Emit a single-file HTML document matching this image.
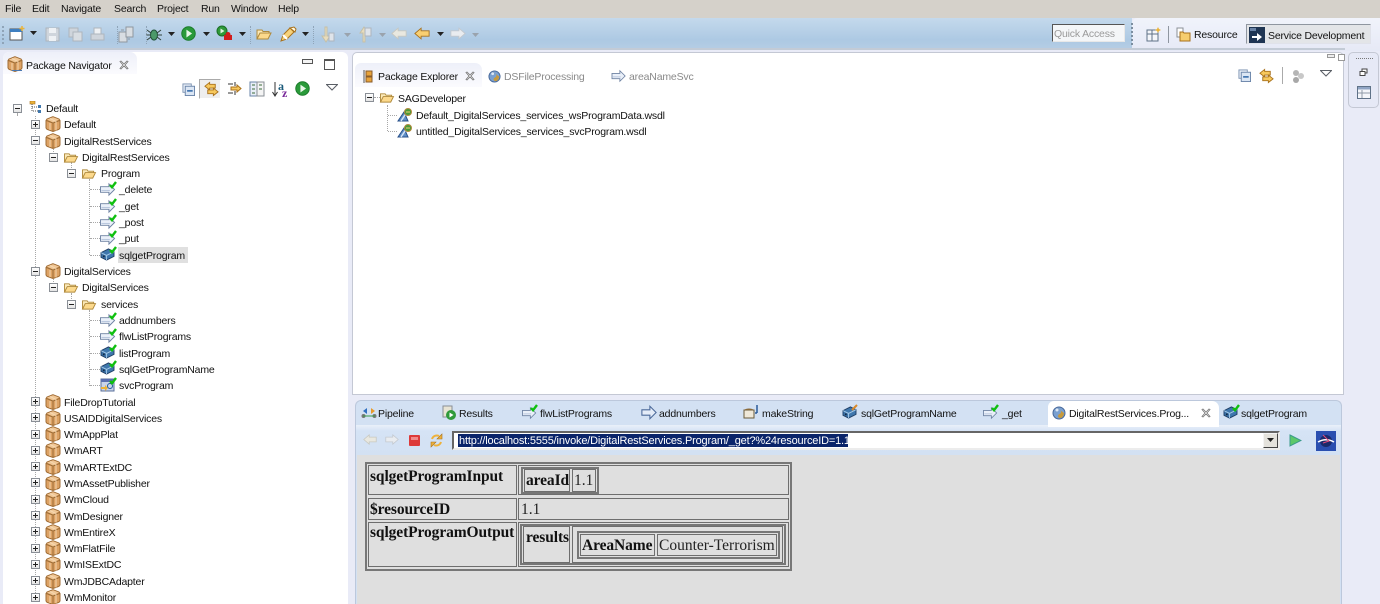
<!DOCTYPE html>
<html><head><meta charset="utf-8"><style>
html,body{margin:0;padding:0;width:1380px;height:604px;overflow:hidden;background:#e9ebf7}
#r{position:relative;width:1380px;height:604px;overflow:hidden;font:10.5px "Liberation Sans",sans-serif;letter-spacing:-.18px;color:#111;background:#e9ebf7;filter:blur(.3px)}
#r div,#r span.t,#r svg{position:absolute}
.t{white-space:nowrap;line-height:14px;height:14px;margin-top:1px}
.m{margin-top:0}
.box{width:7px;height:7px;border:1px solid #8a8f96;background:linear-gradient(#fff,#e4e4e4);font-size:0}
.box:before{content:"";position:absolute;left:1px;top:3px;width:5px;height:1px;background:#222}
.p:after{content:"";position:absolute;left:3px;top:1px;width:1px;height:5px;background:#222}
.v{border-left:1px dotted #a8a8a8;width:0}
.h{border-top:1px dotted #a8a8a8;height:0}
.c{border:1px solid #6e6e6e;box-sizing:border-box}
.s{font:bold 15.5px "Liberation Serif",serif;color:#111;white-space:nowrap;letter-spacing:-.1px;line-height:18px;margin-top:1px}
.n{font:15.5px "Liberation Serif",serif;color:#222;white-space:nowrap;letter-spacing:0;line-height:18px;margin-top:1px}
</style></head><body><div id="r">
<svg width="0" height="0" style="left:0;top:0"><defs>
<symbol id="pkg" viewBox="0 0 16 16"><path d="M8 .7l6 2.300 1 1.500v7.500l-1 1.300-6 2.200-6-2.200-1-1.300V4.500L2 3z" fill="#dda264" stroke="#a06c34"/><path d="M1.500 4.500L8 7l6.500-2.500M8 7v8" fill="none" stroke="#9a6a34"/><path d="M8 1.200l6 2.300L8 6.500 2 3.500z" fill="#f0c796"/><path d="M5 2.500l6 3v9M5 7v7" fill="none" stroke="#f6dcb8" stroke-width=".9"/></symbol>
<symbol id="fo" viewBox="0 0 16 14"><path d="M1 3h5l1 1.500h6v2H4L1 12z" fill="#fbe9b8" stroke="#b08a3c"/><path d="M1 12l3-6h11l-3 6z" fill="#fcd98c" stroke="#b08a3c"/></symbol>
<symbol id="arrow" viewBox="0 0 18 16"><path d="M1 5h9V2l6 6-6 6v-3H1z" fill="#eaf0f9" stroke="#6e82a2"/><path d="M2 9h9" stroke="#b5c4dc"/></symbol>
<symbol id="chk" viewBox="0 0 8 8"><path d="M1 4l2 2.200 4-5.200" fill="none" stroke="#0fc00f" stroke-width="2.400"/></symbol>
<symbol id="cube" viewBox="0 0 16 14"><path d="M1 5l8-4 6 3v5l-8 4-6-3z" fill="#3f77ad" stroke="#1f3f66"/><path d="M1 5l6 3 8-4M7 8v5" fill="none" stroke="#a7cbe8"/><rect x="3" y="8" width="2" height="2" fill="#132b48"/></symbol>
<symbol id="wsdl" viewBox="0 0 16 14"><path d="M1 13L7 4l4 9z" fill="#5f8fc8" stroke="#28508a"/><path d="M4 13l6-9" stroke="#d6e4f5" stroke-width="1.500"/><circle cx="11" cy="4" r="3.500" fill="#4a9a3a" stroke="#b08a3c"/><path d="M9 4h4" stroke="#f2d070"/></symbol>
<symbol id="run" viewBox="0 0 16 16"><circle cx="8" cy="8" r="7.200" fill="#2a9a3a" stroke="#1a7a2a"/><path d="M5.800 3.800l6 4.200-6 4.200z" fill="#e8f6e8"/></symbol>
<symbol id="globe" viewBox="0 0 14 14"><circle cx="7" cy="7" r="6" fill="#7aa0d0" stroke="#47689a"/><path d="M5 2c2 2 4 2 4 4s-3 2-3 4 2 2 3 2c2-1 3-3 3-5" fill="#c79a3c"/><circle cx="5" cy="4" r="1.500" fill="#dce8f6"/></symbol>
<symbol id="x" viewBox="0 0 10 10"><path d="M1 1.500L2 1l3 3 3-3 1 .5-3 3.500 3 3.500-1 .5-3-3-3 3-1-.5 3-3.500z" fill="#fff" stroke="#777" stroke-width=".8"/></symbol>
<symbol id="dd" viewBox="0 0 7 4"><path d="M0 0h7L3.500 4z" fill="#222"/></symbol>
<symbol id="ddg" viewBox="0 0 7 4"><path d="M0 0h7L3.500 4z" fill="#9aa3ad"/></symbol>
<symbol id="menu" viewBox="0 0 12 7"><path d="M.5.500h11L6 6z" fill="#fff" stroke="#5a5f66"/></symbol>
<symbol id="link" viewBox="0 0 16 16"><path d="M6 1L1 5l5 4V7h6V3H6z" fill="#f7c85c" stroke="#a8711c"/><path d="M10 7l5 4-5 4v-2H4V9h6z" fill="#f7c85c" stroke="#a8711c"/></symbol>
<symbol id="coll" viewBox="0 0 14 14"><rect x="1" y="1" width="9" height="9" fill="#e8eef7" stroke="#7e94b2"/><rect x="3.500" y="3.500" width="10" height="10" fill="#dbe6f4" stroke="#6a84a8"/><path d="M5.500 8.500h6" stroke="#1f5aa0" stroke-width="1.500"/></symbol>
<symbol id="la" viewBox="0 0 18 14"><path d="M1 7l7-6v3h9v6H8v3z" fill="#f9cf72" stroke="#a8711c"/></symbol>
<symbol id="ra" viewBox="0 0 18 14"><path d="M17 7l-7-6v3H1v6h9v3z" fill="#e9ecf0" stroke="#c3c8ce"/></symbol>
<symbol id="lg" viewBox="0 0 18 14"><path d="M1 7l7-6v3h9v6H8v3z" fill="#e9e8e0" stroke="#c8c8c0"/></symbol>
</defs></svg>

<!-- Menu -->
<div style="left:0;top:0;width:1380px;height:18px;background:#d5d1ca"></div>
<span class="t m" style="left:5px;top:2px">File</span>
<span class="t m" style="left:32px;top:2px">Edit</span>
<span class="t m" style="left:61px;top:2px">Navigate</span>
<span class="t m" style="left:114px;top:2px">Search</span>
<span class="t m" style="left:157px;top:2px">Project</span>
<span class="t m" style="left:201px;top:2px">Run</span>
<span class="t m" style="left:231px;top:2px">Window</span>
<span class="t m" style="left:278px;top:2px">Help</span>

<!-- Toolbar -->
<div style="left:0;top:18px;width:1132px;height:31px;background:linear-gradient(#c4d9ec,#adc9e3 70%,#b5cde4)"></div>
<div style="left:1132px;top:18px;width:248px;height:33px;background:linear-gradient(#f0f3fb,#e6e9f6);border-top-left-radius:5px"></div>
<div style="left:0;top:48px;width:1345px;height:2px;background:#c3cbd6"></div>
<!-- icons toolbar -->
<svg style="left:9px;top:26px" width="16" height="15" viewBox="0 0 16 15"><rect x="1" y="3" width="12" height="11" fill="#fff" stroke="#555"/><rect x="1" y="3" width="12" height="3" fill="#3f7fc0"/><path d="M13 0v5M10.500 2.500h5" stroke="#eab33a" stroke-width="1.500"/></svg>
<svg style="left:30px;top:31px" width="7" height="4"><use href="#dd"/></svg>
<svg style="left:45px;top:27px" width="15" height="15" viewBox="0 0 15 15"><rect x="1" y="1" width="13" height="13" fill="#cfd5dc" stroke="#aeb5bd"/><rect x="4" y="1" width="7" height="5" fill="#eef1f4"/><rect x="4" y="9" width="7" height="5" fill="#eef1f4"/></svg>
<svg style="left:68px;top:27px" width="15" height="15" viewBox="0 0 15 15"><rect x="1" y="1" width="9" height="9" fill="#cfd5dc" stroke="#aeb5bd"/><rect x="5" y="5" width="9" height="9" fill="#d8dde2" stroke="#aeb5bd"/></svg>
<svg style="left:90px;top:27px" width="15" height="15" viewBox="0 0 15 15"><rect x="4" y="1" width="7" height="6" fill="#eef1f4" stroke="#aeb5bd"/><rect x="1" y="7" width="13" height="6" fill="#cfd5dc" stroke="#aeb5bd"/></svg>
<svg style="left:118px;top:26px" width="16" height="17" viewBox="0 0 16 17"><rect x="1" y="6" width="8" height="10" fill="#d8dde2" stroke="#8f979f"/><rect x="8" y="1" width="7" height="10" fill="#d8dde2" stroke="#8f979f"/><path d="M3 4h3M12 13h-2" stroke="#8f979f"/></svg>
<svg style="left:146px;top:26px" width="16" height="16" viewBox="0 0 16 16"><ellipse cx="8" cy="9" rx="3.500" ry="5" fill="#4c9a6a" stroke="#24543c"/><path d="M1 4l4 3M15 4l-4 3M0 9h4M16 9h-4M1 14l4-3M15 14l-4-3" stroke="#33443c"/></svg>
<svg style="left:168px;top:32px" width="7" height="4"><use href="#dd"/></svg>
<svg style="left:181px;top:26px" width="15" height="15"><use href="#run"/></svg>
<svg style="left:203px;top:32px" width="7" height="4"><use href="#dd"/></svg>
<svg style="left:216px;top:25px" width="17" height="17" viewBox="0 0 17 17"><circle cx="6" cy="6" r="5" fill="#2f9a3a" stroke="#1a6e26"/><path d="M4.500 3.500l4 2.500-4 2.500z" fill="#dff2df"/><rect x="8" y="10" width="8" height="5" fill="#d01c1c"/><circle cx="12" cy="9.500" r="2.500" fill="#d01c1c"/></svg>
<svg style="left:239px;top:32px" width="7" height="4"><use href="#dd"/></svg>
<svg style="left:256px;top:27px" width="16" height="14"><use href="#fo"/></svg>
<svg style="left:280px;top:26px" width="17" height="16" viewBox="0 0 17 16"><path d="M1 15l2-6 7-7 4 4-7 7z" fill="#f7d27a" stroke="#a8711c"/><path d="M3 9l4 4" stroke="#fff" stroke-width="2"/><path d="M10 2l4-1 2 2-1 3z" fill="#fff8e0" stroke="#a8711c"/></svg>
<svg style="left:302px;top:32px" width="7" height="4"><use href="#dd"/></svg>
<svg style="left:320px;top:26px" width="15" height="17" viewBox="0 0 15 17"><path d="M5 1v9H2l4 6 4-6H7V1z" fill="#e8dcbc" stroke="#c4bfa8"/><rect x="9" y="7" width="5" height="8" fill="#dfe4ea" stroke="#adb5be"/></svg>
<svg style="left:344px;top:33px" width="7" height="4"><use href="#ddg"/></svg>
<svg style="left:357px;top:26px" width="15" height="17" viewBox="0 0 15 17"><path d="M6 16V7H3l4-6 4 6H8v9z" fill="#e8dcbc" stroke="#c4bfa8"/><rect x="8" y="2" width="6" height="8" fill="#dfe4ea" stroke="#adb5be"/></svg>
<svg style="left:379px;top:33px" width="7" height="4"><use href="#ddg"/></svg>
<svg style="left:391px;top:27px" width="16" height="13"><use href="#lg"/></svg>
<svg style="left:414px;top:27px" width="16" height="13"><use href="#la"/></svg>
<svg style="left:437px;top:32px" width="7" height="4"><use href="#dd"/></svg>
<svg style="left:450px;top:27px" width="16" height="13"><use href="#ra"/></svg>
<svg style="left:472px;top:33px" width="7" height="4"><use href="#ddg"/></svg>
<!-- separators -->
<div style="left:2px;top:26px;width:0;height:18px;border-left:2px dotted #8fa4b8"></div>
<div style="left:117px;top:26px;width:0;height:18px;border-left:1px dotted #8fa4b8"></div>
<div style="left:146px;top:26px;width:0;height:18px;border-left:1px dotted #8fa4b8"></div>
<div style="left:250px;top:26px;width:0;height:18px;border-left:1px dotted #8fa4b8"></div>
<div style="left:313px;top:26px;width:0;height:18px;border-left:1px dotted #8fa4b8"></div>
<div style="left:1131px;top:23px;width:0;height:22px;border-left:2px dotted #7c8ea0"></div>
<!-- Quick access -->
<div style="left:1052px;top:24px;width:73px;height:18px;box-sizing:border-box;background:#f4f6f8;border:1px solid;border-color:#555 #e8e8e8 #e8e8e8 #555"></div>
<span class="t" style="left:1054px;top:26px;color:#9a9a9a">Quick Access</span>
<!-- Perspectives -->
<svg style="left:1146px;top:27px" width="15" height="15" viewBox="0 0 15 15"><rect x="1" y="3" width="11" height="11" fill="#f4f6fa" stroke="#5f7288"/><path d="M1 7h11M6 3v11" stroke="#5f7288"/><path d="M12 0l1 2 2 1-2 1-1 2-1-2-2-1 2-1z" fill="#eab33a"/></svg>
<div style="left:1168px;top:26px;width:1px;height:17px;background:#8f96a0"></div>
<svg style="left:1176px;top:27px" width="15" height="15" viewBox="0 0 15 15"><rect x="1" y="1" width="6" height="9" fill="#fff" stroke="#8a8f96"/><path d="M4 5h3l1 1h6v8H4z" fill="#f6cd6e" stroke="#a8711c"/></svg>
<span class="t" style="left:1194px;top:27px;color:#111">Resource</span>
<div style="left:1246px;top:24px;width:125px;height:20px;box-sizing:border-box;background:#e3e5e8;border:1px solid;border-color:#8f96a0 #e0e2ea #e0e2ea #8f96a0"></div>
<svg style="left:1249px;top:27px" width="16" height="16" viewBox="0 0 16 16"><rect width="16" height="16" fill="#1f3553"/><rect x="1" y="1" width="6" height="3" fill="#6a83a6"/><path d="M3 9h5V6l5 4-5 4v-3H3z" fill="#fff"/></svg>
<span class="t" style="left:1268px;top:28px;color:#111">Service Development</span>

<!-- Left panel -->
<div style="left:3px;top:52px;width:345px;height:552px;background:#fff;border-top-left-radius:6px;border-top-right-radius:6px"></div>
<div style="left:3px;top:52px;width:134px;height:22px;background:linear-gradient(#eef0f9,#fbfbfe);border-top-left-radius:6px;border-top-right-radius:7px"></div>
<svg style="left:7px;top:56px" width="16" height="16"><use href="#pkg"/></svg>
<div style="left:12px;top:70px;width:10px;height:1px;background:#4a78b0"></div>
<span class="t" style="left:26px;top:58px;color:#111">Package Navigator</span>
<svg style="left:119px;top:60px" width="10" height="10"><use href="#x"/></svg>
<div style="left:302px;top:59px;width:9px;height:3px;border:1px solid #555;background:#f4f4f4"></div>
<div style="left:324px;top:59px;width:9px;height:8px;border:1px solid #555;border-top-width:2px;background:#fff"></div>
<!-- left view toolbar -->
<svg style="left:182px;top:83px" width="13" height="13"><use href="#coll"/></svg>
<div style="left:199px;top:79px;width:22px;height:20px;box-sizing:border-box;background:#eeeeee;border:1px solid;border-color:#aaa #fff #fff #aaa"></div>
<svg style="left:204px;top:81px" width="15" height="16"><use href="#link"/></svg>
<svg style="left:227px;top:81px" width="15" height="15" viewBox="0 0 15 15"><path d="M1 3h5M1 12h5M8 1v4M8 10v4" stroke="#333"/><path d="M4 6h6V4l4 3.500-4 3.500V9H4z" fill="#f7c85c" stroke="#a8711c"/></svg>
<svg style="left:249px;top:81px" width="16" height="16" viewBox="0 0 16 16"><rect x="1" y="1" width="7" height="14" fill="#e8eef7" stroke="#6a84a8"/><rect x="8" y="1" width="7" height="14" fill="#f4f4f4" stroke="#8a8f96"/><path d="M3 4h3M3 8h3M10 4h3M10 8h3M3 12h3" stroke="#3a6a3a"/></svg>
<svg style="left:272px;top:82px" width="6" height="15" viewBox="0 0 6 15"><path d="M3 0v13M.5 10L3 14l2.500-4" fill="none" stroke="#333"/></svg>
<span class="t m" style="left:278px;top:81px;font:bold 12px 'Liberation Serif',serif;color:#1a5a7a;height:10px;line-height:10px">a</span>
<span class="t m" style="left:282px;top:88px;font:bold 12px 'Liberation Serif',serif;color:#7a2a9a;height:10px;line-height:10px">z</span>
<svg style="left:295px;top:81px" width="15" height="15"><use href="#run"/></svg>
<svg style="left:326px;top:84px" width="12" height="7"><use href="#menu"/></svg>

<!-- Tree lines -->
<div class="v" style="left:17px;top:113px;height:2px"></div>
<div class="v" style="left:35px;top:116px;height:485px"></div>
<div class="v" style="left:53px;top:146px;height:8px"></div>
<div class="v" style="left:71px;top:162px;height:8px"></div>
<div class="v" style="left:89px;top:179px;height:76px"></div>
<div class="v" style="left:53px;top:276px;height:8px"></div>
<div class="v" style="left:71px;top:293px;height:8px"></div>
<div class="v" style="left:89px;top:310px;height:76px"></div>
<div class="h" style="left:90px;top:189px;width:10px"></div>
<div class="h" style="left:90px;top:206px;width:10px"></div>
<div class="h" style="left:90px;top:222px;width:10px"></div>
<div class="h" style="left:90px;top:238px;width:10px"></div>
<div class="h" style="left:90px;top:255px;width:10px"></div>
<div class="h" style="left:90px;top:320px;width:10px"></div>
<div class="h" style="left:90px;top:336px;width:10px"></div>
<div class="h" style="left:90px;top:353px;width:10px"></div>
<div class="h" style="left:90px;top:369px;width:10px"></div>
<div class="h" style="left:90px;top:385px;width:10px"></div>

<!-- Tree -->
<div class="box" style="left:13px;top:104px"></div>
<svg style="left:27px;top:101px" width="15" height="13" viewBox="0 0 15 13"><rect x="3" y="0" width="5" height="3" fill="#eab33a" stroke="#a8711c" stroke-width=".6"/><path d="M5 3v7h7M5 6h7" fill="none" stroke="#555" stroke-dasharray="1 1"/><rect x="11" y="4" width="3" height="3" fill="#3f77ad"/><rect x="11" y="9" width="3" height="3" fill="#3f77ad"/></svg>
<span class="t" style="left:46px;top:101px">Default</span>

<div class="box p" style="left:31px;top:120px"></div><svg style="left:45px;top:116px" width="16" height="16"><use href="#pkg"/></svg><span class="t" style="left:64px;top:117px">Default</span>
<div class="box" style="left:31px;top:136px"></div><svg style="left:45px;top:133px" width="16" height="16"><use href="#pkg"/></svg><span class="t" style="left:64px;top:134px">DigitalRestServices</span>
<div class="box" style="left:49px;top:153px"></div><svg style="left:63px;top:151px" width="16" height="13"><use href="#fo"/></svg><span class="t" style="left:82px;top:150px">DigitalRestServices</span>
<div class="box" style="left:67px;top:169px"></div><svg style="left:81px;top:167px" width="16" height="13"><use href="#fo"/></svg><span class="t" style="left:101px;top:166px">Program</span>

<svg style="left:99px;top:182px" width="18" height="15"><use href="#arrow"/></svg><svg style="left:109px;top:181px" width="8" height="8"><use href="#chk"/></svg><span class="t" style="left:119px;top:182px">_delete</span>
<svg style="left:99px;top:199px" width="18" height="15"><use href="#arrow"/></svg><svg style="left:109px;top:198px" width="8" height="8"><use href="#chk"/></svg><span class="t" style="left:119px;top:199px">_get</span>
<svg style="left:99px;top:215px" width="18" height="15"><use href="#arrow"/></svg><svg style="left:109px;top:214px" width="8" height="8"><use href="#chk"/></svg><span class="t" style="left:119px;top:215px">_post</span>
<svg style="left:99px;top:231px" width="18" height="15"><use href="#arrow"/></svg><svg style="left:109px;top:230px" width="8" height="8"><use href="#chk"/></svg><span class="t" style="left:119px;top:231px">_put</span>
<div style="left:118px;top:247px;width:70px;height:16px;background:#e0e0e0"></div>
<svg style="left:100px;top:248px" width="15" height="13"><use href="#cube"/></svg><svg style="left:109px;top:246px" width="8" height="8"><use href="#chk"/></svg><span class="t" style="left:119px;top:248px">sqlgetProgram</span>

<div class="box" style="left:31px;top:267px"></div><svg style="left:45px;top:263px" width="16" height="16"><use href="#pkg"/></svg><span class="t" style="left:64px;top:264px">DigitalServices</span>
<div class="box" style="left:49px;top:283px"></div><svg style="left:63px;top:281px" width="16" height="13"><use href="#fo"/></svg><span class="t" style="left:82px;top:280px">DigitalServices</span>
<div class="box" style="left:67px;top:300px"></div><svg style="left:81px;top:298px" width="16" height="13"><use href="#fo"/></svg><span class="t" style="left:101px;top:297px">services</span>
<svg style="left:99px;top:313px" width="18" height="15"><use href="#arrow"/></svg><svg style="left:109px;top:312px" width="8" height="8"><use href="#chk"/></svg><span class="t" style="left:119px;top:313px">addnumbers</span>
<svg style="left:99px;top:329px" width="18" height="15"><use href="#arrow"/></svg><svg style="left:109px;top:328px" width="8" height="8"><use href="#chk"/></svg><span class="t" style="left:119px;top:329px">flwListPrograms</span>
<svg style="left:100px;top:346px" width="15" height="13"><use href="#cube"/></svg><svg style="left:109px;top:344px" width="8" height="8"><use href="#chk"/></svg><span class="t" style="left:119px;top:346px">listProgram</span>
<svg style="left:100px;top:362px" width="15" height="13"><use href="#cube"/></svg><svg style="left:109px;top:360px" width="8" height="8"><use href="#chk"/></svg><span class="t" style="left:119px;top:362px">sqlGetProgramName</span>
<svg style="left:100px;top:378px" width="15" height="14" viewBox="0 0 15 14"><rect x="1" y="1" width="13" height="12" fill="#c8d4ea" stroke="#5a6f9a"/><rect x="1" y="1" width="13" height="3" fill="#5a6fb0"/><path d="M1 9h4V7l3 3-3 3v-2H1z" fill="#eab33a"/><circle cx="10" cy="8" r="2.500" fill="none" stroke="#1f5aa0"/></svg><svg style="left:109px;top:377px" width="8" height="8"><use href="#chk"/></svg><span class="t" style="left:119px;top:378px">svcProgram</span>

<div class="box p" style="left:31px;top:397px"></div><svg style="left:45px;top:394px" width="16" height="16"><use href="#pkg"/></svg><span class="t" style="left:64px;top:395px">FileDropTutorial</span>
<div class="box p" style="left:31px;top:413px"></div><svg style="left:45px;top:410px" width="16" height="16"><use href="#pkg"/></svg><span class="t" style="left:64px;top:411px">USAIDDigitalServices</span>
<div class="box p" style="left:31px;top:430px"></div><svg style="left:45px;top:426px" width="16" height="16"><use href="#pkg"/></svg><span class="t" style="left:64px;top:427px">WmAppPlat</span>
<div class="box p" style="left:31px;top:446px"></div><svg style="left:45px;top:442px" width="16" height="16"><use href="#pkg"/></svg><span class="t" style="left:64px;top:443px">WmART</span>
<div class="box p" style="left:31px;top:462px"></div><svg style="left:45px;top:459px" width="16" height="16"><use href="#pkg"/></svg><span class="t" style="left:64px;top:460px">WmARTExtDC</span>
<div class="box p" style="left:31px;top:478px"></div><svg style="left:45px;top:475px" width="16" height="16"><use href="#pkg"/></svg><span class="t" style="left:64px;top:476px">WmAssetPublisher</span>
<div class="box p" style="left:31px;top:495px"></div><svg style="left:45px;top:491px" width="16" height="16"><use href="#pkg"/></svg><span class="t" style="left:64px;top:492px">WmCloud</span>
<div class="box p" style="left:31px;top:511px"></div><svg style="left:45px;top:508px" width="16" height="16"><use href="#pkg"/></svg><span class="t" style="left:64px;top:509px">WmDesigner</span>
<div class="box p" style="left:31px;top:527px"></div><svg style="left:45px;top:524px" width="16" height="16"><use href="#pkg"/></svg><span class="t" style="left:64px;top:525px">WmEntireX</span>
<div class="box p" style="left:31px;top:544px"></div><svg style="left:45px;top:540px" width="16" height="16"><use href="#pkg"/></svg><span class="t" style="left:64px;top:541px">WmFlatFile</span>
<div class="box p" style="left:31px;top:560px"></div><svg style="left:45px;top:556px" width="16" height="16"><use href="#pkg"/></svg><span class="t" style="left:64px;top:557px">WmISExtDC</span>
<div class="box p" style="left:31px;top:576px"></div><svg style="left:45px;top:573px" width="16" height="16"><use href="#pkg"/></svg><span class="t" style="left:64px;top:574px">WmJDBCAdapter</span>
<div class="box p" style="left:31px;top:593px"></div><svg style="left:45px;top:589px" width="16" height="16"><use href="#pkg"/></svg><span class="t" style="left:64px;top:590px">WmMonitor</span>

<!-- Editor panel -->
<div style="left:352px;top:52px;width:992px;height:343px;background:#fff;border:1px solid #c4c8d4;box-sizing:border-box;border-radius:5px 5px 0 0"></div>
<div style="left:355px;top:63px;width:127px;height:24px;background:linear-gradient(#eef0f9,#fbfbfe);border-radius:6px 7px 0 0"></div>
<svg style="left:363px;top:69px" width="10" height="15" viewBox="0 0 10 15"><path d="M1 1v13" stroke="#555"/><rect x="3" y="2" width="6" height="5" fill="#e8a33a" stroke="#8a5c2a"/><rect x="3" y="8" width="6" height="5" fill="#e8a33a" stroke="#8a5c2a"/></svg>
<span class="t m" style="left:378px;top:70px;color:#111">Package Explorer</span>
<svg style="left:465px;top:71px" width="10" height="10"><use href="#x"/></svg>
<svg style="left:488px;top:70px" width="13" height="13"><use href="#globe"/></svg>
<span class="t m" style="left:504px;top:70px;color:#8a8a8a">DSFileProcessing</span>
<svg style="left:611px;top:69px" width="16" height="14"><use href="#arrow"/></svg>
<span class="t m" style="left:629px;top:70px;color:#8a8a8a">areaNameSvc</span>
<svg style="left:1238px;top:69px" width="13" height="13"><use href="#coll"/></svg>
<svg style="left:1259px;top:68px" width="15" height="16"><use href="#link"/></svg>
<div style="left:1282px;top:67px;width:1px;height:17px;background:#aaa"></div>
<svg style="left:1291px;top:69px" width="14" height="14" viewBox="0 0 14 14"><circle cx="5" cy="4" r="3" fill="#b5b5b5"/><circle cx="10" cy="7" r="3" fill="#c8c8c8"/><circle cx="5" cy="11" r="3" fill="#a8a8a8"/></svg>
<svg style="left:1320px;top:70px" width="12" height="7"><use href="#menu"/></svg>
<div style="left:1327px;top:54px;width:6px;height:2px;border:1px solid #999;background:#eee"></div>
<div style="left:1338px;top:54px;width:5px;height:5px;border:1px solid #999;background:#fff"></div>

<div class="box" style="left:365px;top:93px"></div>
<div class="h" style="left:374px;top:97px;width:6px"></div>
<svg style="left:379px;top:91px" width="16" height="13"><use href="#fo"/></svg>
<span class="t m" style="left:398px;top:92px;color:#111">SAGDeveloper</span>
<div class="v" style="left:387px;top:105px;height:26px"></div>
<div class="h" style="left:388px;top:115px;width:9px"></div>
<div class="h" style="left:388px;top:131px;width:9px"></div>
<svg style="left:397px;top:108px" width="16" height="14"><use href="#wsdl"/></svg>
<span class="t" style="left:416px;top:108px;color:#111">Default_DigitalServices_services_wsProgramData.wsdl</span>
<svg style="left:397px;top:124px" width="16" height="14"><use href="#wsdl"/></svg>
<span class="t" style="left:416px;top:124px;color:#111">untitled_DigitalServices_services_svcProgram.wsdl</span>

<!-- Bottom panel -->
<div style="left:355px;top:400px;width:987px;height:204px;background:#d3e1f3;border:1px solid #bcc8dc;border-bottom:0;box-sizing:border-box;border-radius:6px 6px 0 0"></div>
<div style="left:356px;top:425px;width:985px;height:30px;background:linear-gradient(#eaf0f9,#d5e3f5 20%,#d3e1f3)"></div>
<div style="left:357px;top:455px;width:983px;height:149px;background:#dfdfdf"></div>
<div style="left:1048px;top:401px;width:171px;height:26px;background:#fff;border-radius:6px 7px 0 0"></div>

<svg style="left:361px;top:405px" width="16" height="14" viewBox="0 0 16 14"><circle cx="2.500" cy="11" r="2" fill="#777"/><circle cx="13.500" cy="11" r="2" fill="#777"/><path d="M2 11h12" stroke="#3a9a4a"/><path d="M2 6l4-3v6z" fill="#2f6fc0"/><path d="M14 6l-4-3v6z" fill="#e89a2a"/></svg>
<span class="t" style="left:378px;top:406px;color:#111">Pipeline</span>
<svg style="left:442px;top:405px" width="15" height="16" viewBox="0 0 15 16"><rect x="1" y="1" width="9" height="11" fill="#e8e4d4" stroke="#8a8f96"/><circle cx="9" cy="10" r="5" fill="#2f9a3a"/><path d="M7.500 7.500l4 2.500-4 2.500z" fill="#fff"/></svg>
<span class="t" style="left:459px;top:406px;color:#111">Results</span>
<svg style="left:521px;top:406px" width="17" height="14"><use href="#arrow"/></svg><svg style="left:530px;top:404px" width="8" height="8"><use href="#chk"/></svg>
<span class="t" style="left:540px;top:406px;color:#111">flwListPrograms</span>
<svg style="left:641px;top:405px" width="16" height="15" viewBox="0 0 18 16"><path d="M1 5h9V1l7 7-7 7v-4H1z" fill="#e4ecf8" stroke="#4c6a9a" stroke-width="1.200"/></svg>
<span class="t" style="left:659px;top:406px;color:#111">addnumbers</span>
<svg style="left:743px;top:405px" width="16" height="15" viewBox="0 0 16 15"><path d="M1 5h10v8H1z" fill="#efe8d8" stroke="#6a5a3a"/><path d="M1 5c2-2 8-2 10 0" fill="#8a6a3a"/><path d="M14 0v8M12 8h2" stroke="#2a5a9a" stroke-width="1.500"/></svg>
<span class="t" style="left:762px;top:406px;color:#111">makeString</span>
<svg style="left:842px;top:406px" width="15" height="13"><use href="#cube"/></svg>
<svg style="left:851px;top:404px" width="7" height="7" viewBox="0 0 7 7"><path d="M1 6l5-5" stroke="#d98a2a" stroke-width="2"/></svg>
<span class="t" style="left:861px;top:406px;color:#111">sqlGetProgramName</span>
<svg style="left:982px;top:406px" width="17" height="14"><use href="#arrow"/></svg><svg style="left:991px;top:404px" width="8" height="8"><use href="#chk"/></svg>
<span class="t" style="left:1002px;top:406px;color:#111">_get</span>
<svg style="left:1052px;top:406px" width="14" height="14"><use href="#globe"/></svg>
<span class="t" style="left:1069px;top:406px;color:#111">DigitalRestServices.Prog...</span>
<svg style="left:1201px;top:408px" width="10" height="10"><use href="#x"/></svg>
<svg style="left:1223px;top:406px" width="15" height="13"><use href="#cube"/></svg><svg style="left:1232px;top:404px" width="8" height="8"><use href="#chk"/></svg>
<span class="t" style="left:1241px;top:406px;color:#111">sqlgetProgram</span>

<!-- Browser bar -->
<svg style="left:363px;top:434px" width="14" height="11"><use href="#lg"/></svg>
<svg style="left:385px;top:434px" width="14" height="11"><use href="#ra"/></svg>
<svg style="left:409px;top:435px" width="11" height="11" viewBox="0 0 11 11"><rect width="11" height="11" rx="1" fill="#dd3a3a"/><rect x="2" y="2" width="7" height="3" fill="#f08a8a"/></svg>
<svg style="left:429px;top:433px" width="15" height="15" viewBox="0 0 15 15"><path d="M13 1v5H8zM2 14V9h5z" fill="#eeb13a" stroke="#a8711c" stroke-width=".6"/><path d="M3 6a5 5 0 0 1 7-3M12 9a5 5 0 0 1-7 3" fill="none" stroke="#eeb13a" stroke-width="2"/></svg>
<div style="left:452px;top:431px;width:828px;height:19px;box-sizing:border-box;background:#fff;border:2px solid;border-color:#666 #ececec #ececec #666"></div>
<div style="left:458px;top:434px;width:390px;height:13px;background:#0a246a"></div>
<span class="t" style="left:459px;top:433px;color:#fff;font-size:11px;letter-spacing:-.18px">http://localhost:5555/invoke/DigitalRestServices.Program/_get?%24resourceID=1.1</span>
<div style="left:1263px;top:433px;width:15px;height:15px;box-sizing:border-box;background:#e4e2dc;border:1px solid;border-color:#f4f4f4 #444 #444 #f4f4f4"></div>
<svg style="left:1267px;top:438px" width="7" height="4"><use href="#dd"/></svg>
<svg style="left:1289px;top:434px" width="13" height="13" viewBox="0 0 13 13"><path d="M1 1l11 5.500L1 12z" fill="#5cc86a" stroke="#3a9a8a"/></svg>
<svg style="left:1316px;top:431px" width="20" height="20" viewBox="0 0 20 20"><rect width="20" height="20" fill="#2a4fb0"/><circle cx="10" cy="10" r="6" fill="#1a2a6a"/><path d="M2 11c5-3 11-3 16 0" stroke="#fff" stroke-width="1.500" fill="none"/><path d="M7 4l6 6-6 2" stroke="#e04a7a" fill="none"/></svg>

<!-- HTML table -->
<div class="c" style="left:365px;top:462px;width:427px;height:109px;border:2px solid #777"></div>
<div class="c" style="left:368px;top:465px;width:149px;height:30px"></div>
<div class="c" style="left:518px;top:465px;width:271px;height:30px"></div>
<div class="c" style="left:368px;top:498px;width:149px;height:22px"></div>
<div class="c" style="left:518px;top:498px;width:271px;height:22px"></div>
<div class="c" style="left:368px;top:522px;width:149px;height:45px"></div>
<div class="c" style="left:518px;top:522px;width:271px;height:45px"></div>
<div class="c" style="left:521px;top:467px;width:78px;height:27px;border:2px solid #777"></div>
<div class="c" style="left:524px;top:469px;width:46px;height:23px"></div>
<div class="c" style="left:572px;top:469px;width:24px;height:23px"></div>
<div class="c" style="left:520px;top:524px;width:266px;height:41px;border:2px solid #777"></div>
<div class="c" style="left:523px;top:526px;width:47px;height:37px"></div>
<div class="c" style="left:572px;top:526px;width:211px;height:37px"></div>
<div class="c" style="left:577px;top:531px;width:203px;height:28px;border:2px solid #777"></div>
<div class="c" style="left:580px;top:534px;width:75px;height:22px"></div>
<div class="c" style="left:657px;top:534px;width:120px;height:22px"></div>
<div class="s" style="left:370px;top:467px">sqlgetProgramInput</div>
<div class="s" style="left:370px;top:500px">$resourceID</div>
<div class="s" style="left:370px;top:523px">sqlgetProgramOutput</div>
<div class="s" style="left:526px;top:471px">areaId</div>
<div class="n" style="left:574px;top:471px">1.1</div>
<div class="n" style="left:521px;top:500px">1.1</div>
<div class="s" style="left:526px;top:528px">results</div>
<div class="s" style="left:582px;top:536px">AreaName</div>
<div class="n" style="left:659px;top:536px">Counter-Terrorism</div>

<!-- Right sidebar -->
<div style="left:1348px;top:52px;width:31px;height:56px;background:#e6e9f6;border:1px solid #c4c8d4;box-sizing:border-box;border-radius:5px"></div>
<div style="left:1356px;top:58px;width:17px;height:0;border-top:1px dotted #777"></div>
<svg style="left:1359px;top:68px" width="9" height="9" viewBox="0 0 9 9"><rect x="3" y="1" width="5" height="4" fill="#fff" stroke="#444"/><rect x="1" y="3.500" width="5" height="4" fill="#fff" stroke="#444"/></svg>
<svg style="left:1357px;top:86px" width="14" height="13" viewBox="0 0 14 13"><rect x=".5" y=".5" width="13" height="12" fill="#f4f6fa" stroke="#5f7288"/><rect x="1" y="1" width="12" height="2.500" fill="#8fa4c4"/><path d="M1 7h12M5 4v8" stroke="#8f9aa8"/></svg>
</div></body></html>
